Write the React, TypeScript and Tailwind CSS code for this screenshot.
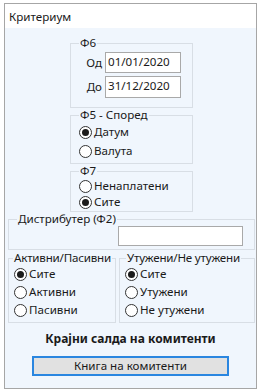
import React from 'react';

// Windows-forms style "Критериум" dialog

function Radio({ label, checked, tight }: { label: string; checked?: boolean; tight?: boolean }) {
  return (
    <div className={'flex items-center ' + (tight ? 'h-[16px]' : 'h-[18px]')}>
      <span className="w-[13px] h-[13px] rounded-full border border-[#333333] bg-white flex items-center justify-center shrink-0">
        {checked && <span className="w-[7px] h-[7px] rounded-full bg-[#1b1b1b]" />}
      </span>
      <span className="ml-[2px] leading-[16px] whitespace-nowrap">{label}</span>
    </div>
  );
}

function Group({ title, className, children }: { title: string; className?: string; children: React.ReactNode }) {
  return (
    <fieldset className={'border border-[#d8dee5] min-w-0 ' + (className ?? '')}>
      <legend className="ml-[8px] px-px leading-[14px] whitespace-nowrap">{title}</legend>
      {children}
    </fieldset>
  );
}

function Field({ value, className }: { value?: string; className?: string }) {
  return (
    <div className={'bg-white border border-[#a9a9a9] px-[2px] leading-[16px] ' + (className ?? '')}>
      {value}
    </div>
  );
}

export default function App() {
  return (
    <div className="w-[260px] h-[392px] bg-white pt-[3px] pl-[4px] font-['Noto_Sans',sans-serif] text-[11.6px] text-[#1a1a1a]">
      <div className="w-[253px] h-[386px] border border-[#a6a6a6] flex flex-col overflow-hidden">
        {/* Title bar */}
        <div className="h-[24px] shrink-0 bg-white flex items-center px-[4px] pt-px">Критериум</div>

        {/* Body */}
        <div className="flex-1 bg-[#f0f6fd] flex flex-col">
          {/* Ф6 */}
          <Group title="Ф6" className="mt-[8px] ml-[65px] w-[123px] pt-[2px] pb-[9px]">
            <div className="flex flex-col gap-[3px]">
              <div className="flex items-center">
                <span className="w-[34px] text-right pr-[3px]">Од</span>
                <Field value="01/01/2020" className="w-[76px] h-[21px] pt-px" />
              </div>
              <div className="flex items-center">
                <span className="w-[34px] text-right pr-[3px]">До</span>
                <Field value="31/12/2020" className="w-[76px] h-[22px] pt-px" />
              </div>
            </div>
          </Group>

          {/* Ф5 */}
          <Group title="Ф5 - Според" className="ml-[65px] w-[123px] pt-px pb-[3px]">
            <div className="pl-[8px] flex flex-col gap-px">
              <Radio label="Датум" checked />
              <Radio label="Валута" />
            </div>
          </Group>

          {/* Ф7 */}
          <Group title="Ф7" className="ml-[65px] w-[123px] pb-px">
            <div className="pl-[8px] flex flex-col">
              <Radio label="Ненаплатени" tight />
              <Radio label="Сите" checked tight />
            </div>
          </Group>

          {/* Дистрибутер */}
          <Group title="Дистрибутер (Ф2)" className="ml-[3px] w-[247px] pb-[3px]">
            <div className="flex justify-end pr-[11px]">
              <Field className="w-[125px] h-[20px]" />
            </div>
          </Group>

          {/* Bottom two groups */}
          <div className="mt-px ml-[3px] flex gap-[3px]">
            <fieldset className="border border-[#d8dee5] min-w-0 w-[108px] pb-[3px]">
              <legend className="ml-[4px] px-px leading-[14px] whitespace-nowrap tracking-[-0.2px]">Активни/Пасивни</legend>
              <div className="pl-[5px] flex flex-col">
                <Radio label="Сите" checked />
                <Radio label="Активни" />
                <Radio label="Пасивни" />
              </div>
            </fieldset>
            <fieldset className="border border-[#d8dee5] min-w-0 w-[136px] pb-[3px]">
              <legend className="ml-[6px] px-px leading-[14px] whitespace-nowrap tracking-[-0.2px]">Утужени/Не утужени</legend>
              <div className="pl-[5px] flex flex-col">
                <Radio label="Сите" checked />
                <Radio label="Утужени" />
                <Radio label="Не утужени" />
              </div>
            </fieldset>
          </div>

          <div className="mt-[8px] text-center font-bold text-[12px] leading-[16px]">Крајни салда на комитенти</div>

          <div className="mt-[9px] flex justify-center">
            <button className="w-[197px] h-[20px] bg-[#e1e1e1] border-2 border-[#2a86e0] leading-[14px] text-[#1a1a1a]">
              Книга на комитенти
            </button>
          </div>
        </div>
      </div>
    </div>
  );
}
